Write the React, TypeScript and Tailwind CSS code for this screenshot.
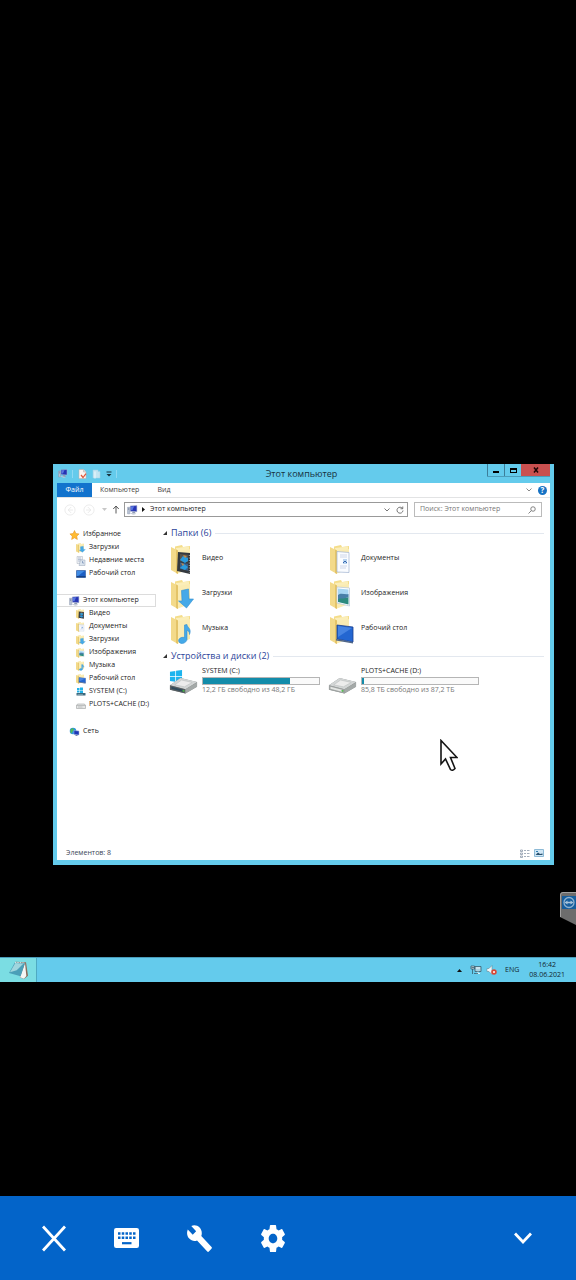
import React from "react";

type Kind =
  | "star" | "recent" | "desktop" | "pc" | "network" | "driveC" | "driveD"
  | "video" | "documents" | "downloads" | "pictures" | "music" | "desk";

function PcIcon() {
  return (
    <svg viewBox="0 0 20 18" className="h-full w-full" aria-hidden="true">
      <path d="M1 4h4v12H1z" fill="#b9c3d6" stroke="#7f8ba6" strokeWidth=".8" />
      <path d="M2 6h2M2 8h2" stroke="#5c6b8c" />
      <path d="M6 1.5l12-.5v11l-12-.8z" fill="#2534b4" stroke="#a8b4cf" strokeWidth="1" />
      <path d="M7 2.5l6-.3-3 7-3-.2z" fill="#5a78e0" />
      <path d="M10 12h4l2 3.500h-7z" fill="#8f9bb5" />
      <path d="M3 14l5 .5 8 2-5 1z" fill="#c6ccd9" />
    </svg>
  );
}

function FolderArt({ kind, small }: { kind: Kind; small?: boolean }) {
  return (
    <svg viewBox={small ? "2 1 24 31" : "0 0 29 32"} preserveAspectRatio={small ? "none" : "xMidYMid"} className="h-full w-full" aria-hidden="true">
      <path d="M6 3.500L13 2l1 2 7-1v22l-12 3-3-2z" fill="#f4dd8a" />
      <path d="M7 5l13-1.500V26l-11 2z" fill="#fbeeb9" />
      <path d="M2 4l7 3.500V31l-7-4z" fill="#f3da8a" />
      <path d="M7 6.500l2 1V31l-2-1z" fill="#e4c468" />
      <path d="M9 8l12-2v20L9 30.500z" fill="#faebb2" />
      {kind === "video" && (
        <g>
          <path d="M9 9l12 1v21L8 28z" fill="#34393e" />
          <path d="M11 11l8 .8v7.500l-8-1z" fill="#57534a" />
          <path d="M11 19.500l8 1.200v7l-8-2z" fill="#38608c" />
          <path d="M11 17l3-4 5 2v3l-3 2zM11 25l4-4 4 3-3 3z" fill="#2a9bdd" />
          <path d="M14 12l4 1-2 2zM12 20l3 1-1 2z" fill="#c98d48" />
          <path d="M20.300 12v18" stroke="#cfd7de" strokeWidth=".8" strokeDasharray="1 1.500" />
        </g>
      )}
      {kind === "downloads" && (
        <path d="M12.500 12.500l7-1.500.5 10h4.500l-7 9L9.500 23h3.500z" fill="#45a9e8" stroke="#2f8fd2" strokeWidth=".6" />
      )}
      {kind === "music" && (
        <path d="M15.500 12l2.500-.5c0 3 5 4 2.500 10 0-3-1.500-4-2.500-4v9c-.5 3.500-6 5.500-8 2.500-1.500-3 2-5.500 5.500-4.500z" fill="#45a9e8" stroke="#2f8fd2" strokeWidth=".6" />
      )}
      {kind === "documents" && (
        <g>
          <path d="M9 8.500l12 1v20L9 29z" fill="#fafcff" stroke="#9fb2d0" strokeWidth=".7" />
          <path d="M12 12h7M12 14h7M12 23h7M12 25h6" stroke="#c3cde2" strokeWidth=".8" />
          <path d="M15 16h4v5h-4z" fill="#bad5f0" />
          <path d="M15 20l2-2 2 2" stroke="#3566ae" fill="none" />
        </g>
      )}
      {kind === "pictures" && (
        <g>
          <path d="M9 9l12.500 1v18L9 25z" fill="#fff" stroke="#b4c6d8" strokeWidth=".7" />
          <path d="M10 10.500l10.500 1v8L10 20z" fill="#a7d6f3" />
          <path d="M10 20c4-3 6 1 10.500-1v7.500L10 24z" fill="#2d8b80" />
          <path d="M10 17c3-3 7 0 10.500-1v3c-4 2-7 1-10.500 2z" fill="#487fa8" />
        </g>
      )}
      {kind === "desk" && (
        <g>
          <path d="M9 12l16 2v15L9 26z" fill="#2366d1" stroke="#1b3f8e" strokeWidth=".8" />
          <path d="M10 13l14 2L10 24z" fill="#4684e2" />
          <path d="M8 26l17 3v1.500L8 27.500z" fill="#506789" />
        </g>
      )}
    </svg>
  );
}

function DriveArt({ system }: { system: boolean }) {
  return (
    <svg viewBox="0 0 30 28" className="h-full w-full" aria-hidden="true">
      {system && <path d="M1 4.500l5.500-.8v5.100H1zM7.300 3.500l6.200-.8v6.100H7.300zM1 9.600h5.500v5.100L1 14zM7.300 9.600h6.200v6l-6.200-.8z" fill="#1cb4ee" />}
      <path d="M1 18.500L12 11l17 4v5L17 27 1 23z" fill="#8c9090" />
      <path d="M1 18.500L12 11l17 4-12 7.500z" fill="#d3d6d6" />
      <path d="M6 18l7-5 11 2.500-8 4.500z" fill="#ececec" stroke="#b3b8b8" strokeWidth=".5" />
      <path d="M1 18.500l16 4V27L1 23z" fill={system ? "#596063" : "#9fa3a2"} />
      <path d="M2.500 20l12 3v2l-12-3z" fill={system ? "#304b5c" : "#e4e6e4"} />
      <path d="M14 24l2 .5" stroke="#45c53f" strokeWidth="1.500" />
      <path d="M17 22.500l12-7v4.500L17 27z" fill="#a4a9a8" />
    </svg>
  );
}

function SmallIcon({ kind }: { kind: Kind }) {
  switch (kind) {
    case "star":
      return (
        <svg viewBox="0 0 20 20" className="h-full w-full" aria-hidden="true">
          <path d="M10 1l2.800 6 6.400.8-4.700 4.500 1.200 6.600L10 15.700l-5.700 3.200 1.200-6.600L.8 7.800l6.400-.8z" fill="#ffbb32" stroke="#e38a18" />
        </svg>
      );
    case "recent":
      return (
        <svg viewBox="0 0 20 20" className="h-full w-full" aria-hidden="true">
          <path d="M2 1h11v14H2z" fill="#eef1f5" stroke="#aab3bf" />
          <path d="M4 4h6M4 7h7M4 10h4" stroke="#7c93b5" />
          <path d="M9 8h9v11H6z" fill="#dbe4ee" stroke="#97a5b8" />
          <path d="M13 10v4h3" stroke="#4c6e9e" fill="none" />
        </svg>
      );
    case "desktop":
      return (
        <svg viewBox="0 0 20 20" className="h-full w-full" aria-hidden="true">
          <path d="M1 3h18v14H1z" fill="#1d5fc4" stroke="#164791" />
          <path d="M2 4h15L4 14H2z" fill="#3f8be4" />
          <path d="M1 15.500h18" stroke="#17396f" strokeWidth="2" />
        </svg>
      );
    case "network":
      return (
        <svg viewBox="0 0 20 20" className="h-full w-full" aria-hidden="true">
          <circle cx="7" cy="8" r="6.500" fill="#2e94dc" />
          <path d="M3 4c3-3 5-1 6 1l-3 4-2 4c-3-3-3-6-1-9z" fill="#53b957" />
          <path d="M9 7l10 1v8l-10-1z" fill="#1b37b6" stroke="#a5b6d6" />
          <path d="M12 16h4v2h-4z" fill="#7886a5" />
        </svg>
      );
    case "driveC":
      return (
        <svg viewBox="0 0 20 20" className="h-full w-full" aria-hidden="true">
          <path d="M2 2h5v4H2zM8 1h6v5H8zM2 7h5v4H2zM8 7h6v5H8z" fill="#22b2e8" />
          <path d="M1 12h18v5H1z" fill="#3c687c" />
          <path d="M3 15h11" stroke="#a9cbd7" />
        </svg>
      );
    case "driveD":
      return (
        <svg viewBox="0 0 20 20" className="h-full w-full" aria-hidden="true">
          <path d="M3 8h14l2 3v6H1v-6z" fill="#e5e6e6" stroke="#8c9090" />
          <path d="M1 11h18M4 14h9" stroke="#979b9b" />
        </svg>
      );
    case "pc":
      return <PcIcon />;
    default:
      return <FolderArt kind={kind} small />;
  }
}

type NavItem = { label: string; kind: Kind };
type NavGroup = { root: NavItem; children: NavItem[]; selected?: boolean };

const groups: NavGroup[] = [
  {
    root: { label: "Избранное", kind: "star" },
    children: [
      { label: "Загрузки", kind: "downloads" },
      { label: "Недавние места", kind: "recent" },
      { label: "Рабочий стол", kind: "desktop" },
    ],
  },
  {
    root: { label: "Этот компьютер", kind: "pc" },
    selected: true,
    children: [
      { label: "Видео", kind: "video" },
      { label: "Документы", kind: "documents" },
      { label: "Загрузки", kind: "downloads" },
      { label: "Изображения", kind: "pictures" },
      { label: "Музыка", kind: "music" },
      { label: "Рабочий стол", kind: "desk" },
      { label: "SYSTEM (C:)", kind: "driveC" },
      { label: "PLOTS+CACHE (D:)", kind: "driveD" },
    ],
  },
  { root: { label: "Сеть", kind: "network" }, children: [] },
];

const folders: NavItem[] = [
  { label: "Видео", kind: "video" },
  { label: "Документы", kind: "documents" },
  { label: "Загрузки", kind: "downloads" },
  { label: "Изображения", kind: "pictures" },
  { label: "Музыка", kind: "music" },
  { label: "Рабочий стол", kind: "desk" },
];

const drives = [
  { label: "SYSTEM (C:)", note: "12,2 ГБ свободно из 48,2 ГБ", used: 75, system: true },
  { label: "PLOTS+CACHE (D:)", note: "85,8 ТБ свободно из 87,2 ТБ", used: 2, system: false },
];

function TitleBar() {
  return (
    <header className="relative flex h-[19px] items-center pl-[5px]">
      <span className="h-[9px] w-[10px]"><PcIcon /></span>
      <span className="ml-1 h-2 w-px bg-[#8fd9f3]" />
      <button aria-label="Свойства" className="ml-[5px] h-[10px] w-[9px]">
        <svg viewBox="0 0 18 20" className="h-full w-full">
          <path d="M2 1h9l5 5v13H2z" fill="#fbf6f3" stroke="#c7a9a0" />
          <path d="M11 1v5h5" fill="#ddd" stroke="#b8aaa6" />
          <path d="M6 12l4 5 6-8" fill="none" stroke="#e0583c" strokeWidth="2.500" />
        </svg>
      </button>
      <button aria-label="Новая папка" className="ml-[5px] h-[10px] w-[9px]">
        <svg viewBox="0 0 18 20" className="h-full w-full">
          <path d="M2 2h10v3h4v13H2z" fill="#c3e5f2" stroke="#a4d2e6" />
          <path d="M6 5v14" stroke="#eef8fc" strokeWidth="2" />
        </svg>
      </button>
      <button aria-label="Настройка панели" className="ml-[5px] h-[6px] w-[6px]">
        <svg viewBox="0 0 12 12" className="h-full w-full"><path d="M1 1h10v2H1zM1 6h10l-5 5z" fill="#17323d" /></svg>
      </button>
      <span className="ml-1 h-2 w-px bg-[#8fd9f3]" />
      <h1 className="pointer-events-none absolute inset-x-0 pr-1 text-center text-[9px] leading-[19px] text-[#16323e]">Этот компьютер</h1>
      <div className="ml-auto mr-1 flex h-[13px] self-start border-b border-[#4b9dbb]">
        <button aria-label="Свернуть" className="flex w-[17px] items-center justify-center border-l border-[#3c7e99]">
          <span className="mt-1 h-[2px] w-[6px] bg-black" />
        </button>
        <button aria-label="Развернуть" className="flex w-[17px] items-center justify-center border-l border-[#3c7e99]">
          <span className="h-[5px] w-[7px] border border-t-2 border-black" />
        </button>
        <button aria-label="Закрыть" className="flex w-[29px] items-center justify-center bg-[#c9504f]">
          <svg viewBox="0 0 12 12" className="h-[6px] w-[6px]"><path d="M2 1l8 10M10 1L2 11" stroke="#1c0505" strokeWidth="3" /></svg>
        </button>
      </div>
    </header>
  );
}

function AddressRow() {
  return (
    <div className="flex items-center pb-[5px] pl-[7px] pr-2 pt-1 text-[7px]">
      <div className="flex w-[60px] shrink-0 items-center text-[#cfcfcf]">
        {["M12 5L7 10l5 5M7 10h8", "M8 5l5 5-5 5M13 10H5"].map((d, i) => (
          <button key={d} aria-label={i ? "Вперед" : "Назад"} className="mr-[7px] h-3 w-3 shrink-0">
            <svg viewBox="0 0 20 20" className="h-full w-full" fill="none" stroke="#e4e4e4" strokeWidth="1.200">
              <circle cx="10" cy="10" r="8.500" /><path d={d} />
            </svg>
          </button>
        ))}
        <svg viewBox="0 0 10 6" className="h-[3px] w-[5px] shrink-0" fill="#c7c7c7" aria-hidden="true"><path d="M0 0h10L5 6z" /></svg>
        <button aria-label="Вверх" className="ml-[5px] h-[9px] w-2 shrink-0">
          <svg viewBox="0 0 16 18" className="h-full w-full" fill="none" stroke="#585858" strokeWidth="2"><path d="M8 17V2M2.500 8L8 2l5.500 6" /></svg>
        </button>
      </div>
      <div className="flex h-[15px] flex-1 items-center border border-[#999] pl-[2px]">
        <span className="h-[10px] w-[11px]"><PcIcon /></span>
        <svg viewBox="0 0 6 10" className="ml-[4px] h-[5px] w-[3px]" aria-hidden="true"><path d="M0 0l6 5-6 5z" fill="#111" /></svg>
        <span className="ml-[5px] text-[#1c1c1c]">Этот компьютер</span>
        <button aria-label="Предыдущие расположения" className="ml-auto mr-[6px]">
          <svg viewBox="0 0 12 8" className="h-1 w-[6px]" fill="none" stroke="#777" strokeWidth="2"><path d="M1 1l5 5 5-5" /></svg>
        </button>
        <button aria-label="Обновить" className="mr-[3px]">
          <svg viewBox="0 0 16 16" className="h-2 w-2" fill="none" stroke="#666" strokeWidth="1.800"><path d="M13 5a6 6 0 1 0 1 4M13.500 1v4.500H9" /></svg>
        </button>
      </div>
      <label className="ml-[6px] flex h-[15px] w-32 items-center border border-[#bbb] px-[5px]">
        <input aria-label="Поиск" placeholder="Поиск: Этот компьютер" className="min-w-0 flex-1 bg-transparent outline-none placeholder:text-[#777]" />
        <svg viewBox="0 0 16 16" className="h-2 w-2" fill="none" stroke="#666" strokeWidth="1.600" aria-hidden="true"><circle cx="10" cy="6" r="4.500" /><path d="M6.500 9.500L1 15" /></svg>
      </label>
    </div>
  );
}

function NavRow({ item, nested, selected }: { item: NavItem; nested?: boolean; selected?: boolean }) {
  return (
    <li>
      <a
        href="#"
        aria-current={selected ? "page" : undefined}
        className={
          "flex h-[13px] items-center gap-[3px] whitespace-nowrap border border-l-0 " +
          (selected ? "border-[#dcdcdc] " : "border-transparent ") +
          (nested ? "pl-[19px]" : "pl-3")
        }
      >
        <span className={nested ? "h-[10px] w-[10px]" : "h-[10px] w-[11px]"}><SmallIcon kind={item.kind} /></span>
        {item.label}
      </a>
    </li>
  );
}

function SectionTitle({ children }: { children: React.ReactNode }) {
  return (
    <h2 className="flex h-3 items-center text-[9px] text-[#2c449a]">
      <svg viewBox="0 0 8 8" className="mr-1 h-1 w-1" aria-hidden="true"><path d="M8 0v8H0z" fill="#333" /></svg>
      {children}
      <span className="ml-1 h-px flex-1 bg-[#e3e8ef]" />
    </h2>
  );
}

function Explorer() {
  return (
    <section aria-label="Этот компьютер" className="flex flex-col bg-[#64cbec] text-[#1b1b1b]">
      <TitleBar />
      <div className="mx-1 mb-[5px] flex flex-col bg-white">
        <nav aria-label="Лента" className="flex h-[15px] items-center border-b border-[#e2e3e4] text-[7px] text-[#444]">
          <button className="h-full w-[35px] bg-[#1273cd] text-white">Файл</button>
          <button className="ml-2">Компьютер</button>
          <button className="ml-[18px]">Вид</button>
          <button aria-label="Развернуть ленту" className="ml-auto">
            <svg viewBox="0 0 12 8" className="h-1 w-[6px]" fill="none" stroke="#888" strokeWidth="2"><path d="M1 1l5 5 5-5" /></svg>
          </button>
          <button aria-label="Справка" className="ml-[6px] mr-[3px] flex h-[9px] w-[9px] items-center justify-center rounded-full bg-[#1672c4] text-[8px] font-bold text-white">?</button>
        </nav>
        <AddressRow />
        <div className="flex min-h-[324px]">
          <nav aria-label="Область навигации" className="w-[99px] shrink-0 pt-[6px] text-[7px]">
            {groups.map((g) => (
              <ul key={g.root.label} className="mb-[14px]">
                <NavRow item={g.root} selected={g.selected} />
                {g.children.map((c) => <NavRow key={c.label} item={c} nested />)}
              </ul>
            ))}
          </nav>
          <main className="min-w-0 flex-1 pl-[7px] pr-[6px] pt-[5px] text-[7px]">
            <SectionTitle>Папки (6)</SectionTitle>
            <ul className="grid grid-cols-[repeat(auto-fill,159px)] pb-1 pl-[6px] pt-[2px]">
              {folders.map((f) => (
                <li key={f.label} className="flex h-[35px] items-center gap-1">
                  <span className="h-[32px] w-[29px]"><FolderArt kind={f.kind} /></span>
                  {f.label}
                </li>
              ))}
            </ul>
            <SectionTitle>Устройства и диски (2)</SectionTitle>
            <ul className="grid grid-cols-[repeat(auto-fill,159px)] pl-[6px] pt-1">
              {drives.map((d) => (
                <li key={d.label} className="flex items-center gap-1 pr-2">
                  <span className="h-[28px] w-[29px]"><DriveArt system={d.system} /></span>
                  <div className="flex-1 leading-[10px]">
                    <div>{d.label}</div>
                    <div className="mt-px h-2 border border-[#b5b5b5] bg-[#fafafa]">
                      <div className="h-full bg-[#138caa]" style={{ width: `${d.used}%` }} />
                    </div>
                    <div className="whitespace-nowrap text-[#777]">{d.note}</div>
                  </div>
                </li>
              ))}
            </ul>
          </main>
        </div>
        <footer className="flex h-[14px] items-center pl-[9px] pr-[6px] text-[7px] text-[#3b4656]">
          Элементов: 8
          <button aria-label="Таблица" className="ml-auto">
            <svg viewBox="0 0 20 18" className="h-[9px] w-[10px]" fill="none" stroke="#8794a5" strokeWidth="1.500"><path d="M1 2h4v3H1zM1 8h4v3H1zM1 14h4v3H1zM8 3h4M14 3h5M8 9h4M14 9h5M8 15h4M14 15h5" /></svg>
          </button>
          <button aria-label="Крупные значки" className="ml-1">
            <svg viewBox="0 0 20 16" className="h-2 w-[10px]"><path d="M1 1h18v14H1z" fill="#cfe6f5" stroke="#8dbad6" strokeWidth="2" /><path d="M3 12l5-5 4 3 5-1v3H3z" fill="#27506e" /><path d="M4 4h4v2H4z" fill="#2f7db0" /></svg>
          </button>
        </footer>
      </div>
    </section>
  );
}

function TaskBar() {
  return (
    <footer className="flex h-[25px] items-center border-t border-[#4a9cb9] bg-[#64cbec] text-[7px] text-[#12252e]">
      <button aria-label="Блокнот" className="flex h-full w-[37px] items-center justify-center border-r border-[#4eaac2] bg-[#7bdde3]">
        <svg viewBox="0 0 60 54" className="h-[18px] w-5">
          <path d="M22 2l32 2 6 40-11 9-12-3z" fill="#8a6a5a" />
          <path d="M51 6l4 39-7 8-12-4z" fill="#f4f6f5" />
          <path d="M21 4l30 2-13 40L3 36z" fill="#4b9fb8" />
          <path d="M22 6l24 2-20 20L6 34z" fill="#a0d6de" />
          <path d="M21 4l30 2" stroke="#e6eeee" strokeWidth="3" strokeDasharray="3 2" />
        </svg>
      </button>
      <button aria-label="Отображать скрытые значки" className="ml-auto">
        <svg viewBox="0 0 10 6" className="h-[3px] w-[5px]"><path d="M0 6h10L5 0z" fill="#111" /></svg>
      </button>
      <svg viewBox="0 0 24 20" className="ml-2 h-[10px] w-3" fill="none" stroke="#355765" strokeWidth="1.500" role="img" aria-label="Сеть">
        <path d="M2 2h7v6H2zM5 8v10M3 5h5" fill="#cae6ef" />
        <path d="M10 3h12v10H10z" fill="#a9d3e2" /><path d="M16 13v3M12 17h8M12 6h8" stroke="#fff" />
        <path d="M8 17h8" />
      </svg>
      <svg viewBox="0 0 22 20" className="ml-1 h-[10px] w-[11px]" role="img" aria-label="Звук выключен">
        <path d="M2 7h4l6-6v18l-6-6H2z" fill="#eff7fa" stroke="#5f7d89" />
        <circle cx="16" cy="14" r="5.500" fill="#d94836" /><path d="M14 12l4 4M18 12l-4 4" stroke="#fff" strokeWidth="1.500" />
      </svg>
      <span className="ml-2">ENG</span>
      <time dateTime="2021-06-08T16:42" className="ml-[10px] mr-[11px] text-center leading-[10px]">
        16:42<br />08.06.2021
      </time>
    </footer>
  );
}

function ControlBar() {
  const button = "flex w-[73px] items-center justify-center";
  return (
    <nav aria-label="Управление сеансом" className="mt-auto flex h-[84px] bg-[#0364c9] px-[17px] text-white">
      <button aria-label="Закрыть сеанс" className={button}>
        <svg viewBox="0 0 24 27" className="h-[27px] w-6" fill="none" stroke="currentColor" strokeWidth="2.800"><path d="M1 1.500l22 24M23 1.500L1 25.500" /></svg>
      </button>
      <button aria-label="Клавиатура" className={button}>
        <svg viewBox="0 0 25 20" className="h-5 w-[25px]">
          <rect width="25" height="20" rx="2.200" fill="currentColor" />
          <path d="M4 5.500h17.500M4 9.700h17.500" stroke="#0364c9" strokeWidth="2.400" strokeDasharray="2.500 1.250" />
          <path d="M8 15.200h9.500" stroke="#0364c9" strokeWidth="2.200" />
        </svg>
      </button>
      <button aria-label="Инструменты" className={button}>
        <svg viewBox="0.900 0.900 22.200 22.200" preserveAspectRatio="none" className="h-[27px] w-[25px]" fill="currentColor">
          <path d="M22.700 19l-9.100-9.100c.9-2.300.4-5-1.500-6.900-2-2-5-2.400-7.400-1.300L9 6 6 9 1.600 4.700C.4 7.100.9 10.100 2.900 12.100c1.900 1.900 4.600 2.400 6.900 1.500l9.100 9.100c.4.4 1 .4 1.400 0l2.300-2.300c.5-.4.5-1.100.1-1.400z" />
        </svg>
      </button>
      <button aria-label="Настройки" className={button}>
        <svg viewBox="2.200 2 19.600 20" preserveAspectRatio="none" className="h-[27px] w-6" fill="currentColor">
          <path d="M19.430 12.980c.04-.32.07-.64.07-.98s-.03-.66-.07-.98l2.110-1.650c.19-.15.24-.42.12-.64l-2-3.460c-.12-.22-.39-.3-.61-.22l-2.490 1c-.52-.4-1.080-.73-1.690-.98l-.38-2.650C14.460 2.180 14.250 2 14 2h-4c-.25 0-.46.18-.49.42l-.38 2.650c-.61.25-1.170.59-1.690.98l-2.490-1c-.23-.09-.49 0-.61.22l-2 3.460c-.13.22-.07.49.12.64l2.110 1.650c-.04.32-.07.65-.07.98s.03.66.07.98l-2.110 1.650c-.19.15-.24.42-.12.64l2 3.460c.12.22.39.3.61.22l2.490-1c.52.4 1.080.73 1.690.98l.38 2.650c.03.24.24.42.49.42h4c.25 0 .46-.18.49-.42l.38-2.650c.61-.25 1.170-.59 1.690-.98l2.490 1c.23.09.49 0 .61-.22l2-3.460c.12-.22.07-.49-.12-.64l-2.110-1.650zM12 15.500c-1.930 0-3.500-1.570-3.500-3.500s1.570-3.500 3.500-3.500 3.500 1.570 3.500 3.500-1.570 3.500-3.500 3.500z" />
        </svg>
      </button>
      <button aria-label="Свернуть панель" className={button + " ml-auto"}>
        <svg viewBox="0 0 18 12" className="h-3 w-[18px]" fill="none" stroke="currentColor" strokeWidth="2.800"><path d="M1 1.500l8 8.500 8-8.500" /></svg>
      </button>
    </nav>
  );
}

export default function App() {
  return (
    <div className="flex min-h-screen flex-col bg-black font-['Open_Sans','Noto_Sans',sans-serif]">
      <div className="relative pb-[92px] pl-[53px] pr-[22px] pt-[464px]">
        <Explorer />
        <svg viewBox="0 0 18 33" className="absolute left-[440px] top-[739px] h-[33px] w-[18px]" aria-hidden="true">
          <path d="M1 1.500v23.500l4.500-5 5 10.500q2 2 4.500-1L10.500 18.500H17z" fill="#fff" stroke="#151515" strokeWidth="1.600" />
        </svg>
        <button aria-label="Панель TeamViewer" className="absolute right-0 top-[892px] h-[33px] w-4">
          <svg viewBox="0 0 16 33" className="h-full w-full">
            <path d="M16 0H3Q0 0 0 3v22l16 8z" fill="#6d6d6d" />
            <path d="M16 .5H3Q.5.500.5 3v22" fill="none" stroke="#a1a1a1" />
            <path d="M2 4h14v13H2z" fill="#155d9d" />
            <circle cx="9" cy="10.500" r="5" fill="none" stroke="#8fb1ce" strokeWidth="1.300" />
            <path d="M4.500 10.500l3-2v1.300h3V8.500l3 2-3 2v-1.300h-3v1.300z" fill="#a9c4da" />
          </svg>
        </button>
      </div>
      <TaskBar />
      <ControlBar />
    </div>
  );
}
